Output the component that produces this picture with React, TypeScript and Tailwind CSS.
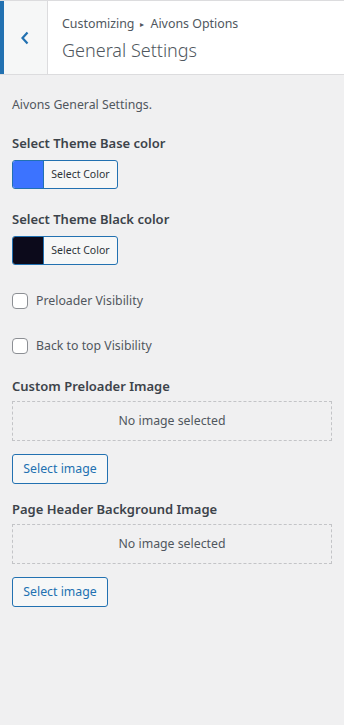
import React from "react";

const font = { fontFamily: '"Noto Sans", "Open Sans", sans-serif' };

function ColorPicker({ color, label, mb }: { color: string; label: string; mb: string }) {
  return (
    <div className={mb}>
      <div className="text-[13px] font-semibold text-[#3c434a] leading-[20px] mb-[7px]">{label}</div>
      <button className="flex h-[29px] w-[106px] rounded-[3px] border border-[#2271b1] overflow-hidden bg-[#f6f7f7]">
        <span className="w-[30px] h-full" style={{ background: color }} />
        <span className="flex-1 flex items-center justify-center text-[10.5px] text-[#2c3338] border-l border-[#2271b1] whitespace-nowrap">Select Color</span>
      </button>
    </div>
  );
}

function Check({ label, mb }: { label: string; mb: string }) {
  return (
    <label className={"flex items-center gap-[8px] h-[16px] " + mb}>
      <span className="w-[16px] h-[16px] rounded-[4px] border border-[#8c8f94] bg-white" />
      <span className="text-[12.3px] text-[#50575e]">{label}</span>
    </label>
  );
}

function ImagePicker({ label, mb }: { label: string; mb: string }) {
  return (
    <div className={mb}>
      <div className="text-[13px] font-semibold text-[#3c434a] leading-[20px] mb-[5px]">{label}</div>
      <div className="h-[40px] border border-dashed border-[#c3c4c7] flex items-center justify-center text-[12.3px] text-[#50575e]">
        No image selected
      </div>
      <button className="mt-[13px] h-[30px] w-[96px] rounded-[3px] border border-[#2271b1] bg-[#f6f7f7] text-[12.3px] text-[#2271b1] whitespace-nowrap">
        Select image
      </button>
    </div>
  );
}

export default function App() {
  return (
    <div className="w-[344px] h-[725px] bg-[#f0f0f1]" style={font}>
      <div className="flex h-[75px] bg-white border-t border-b border-[#dcdcde]">
        <div className="w-[48px] flex items-center justify-center bg-[#f6f7f7] border-l-[4px] border-[#2271b1] border-r border-r-[#dcdcde]">
          <svg width="12" height="16" viewBox="0 0 12 16" className="mr-[2px]">
            <path d="M8.5 2.5 L3.5 8 L8.5 13.5" stroke="#2271b1" strokeWidth="2.2" fill="none" />
          </svg>
        </div>
        <div className="flex flex-col justify-center pl-[14px] pt-[3px]">
          <div className="text-[12.4px] text-[#50575e] leading-[18px] flex items-center">
            Customizing
            <span className="mx-[6px] text-[8px]">▸</span>
            Aivons Options
          </div>
          <div className="text-[18px] font-light text-[#50575e] leading-[26px] mt-[4px]">General Settings</div>
        </div>
      </div>
      <div className="px-[12px] pt-[20px]">
        <div className="text-[12.3px] text-[#50575e] leading-[20px] mb-[18px]">Aivons General Settings.</div>
        <ColorPicker color="#3c73ff" label="Select Theme Base color" mb="mb-[20px]" />
        <ColorPicker color="#0c0a1b" label="Select Theme Black color" mb="mb-[28px]" />
        <Check label="Preloader Visibility" mb="mb-[29px]" />
        <Check label="Back to top Visibility" mb="mb-[22px]" />
        <ImagePicker label="Custom Preloader Image" mb="mb-[15px]" />
        <ImagePicker label="Page Header Background Image" mb="mb-0" />
      </div>
    </div>
  );
}
